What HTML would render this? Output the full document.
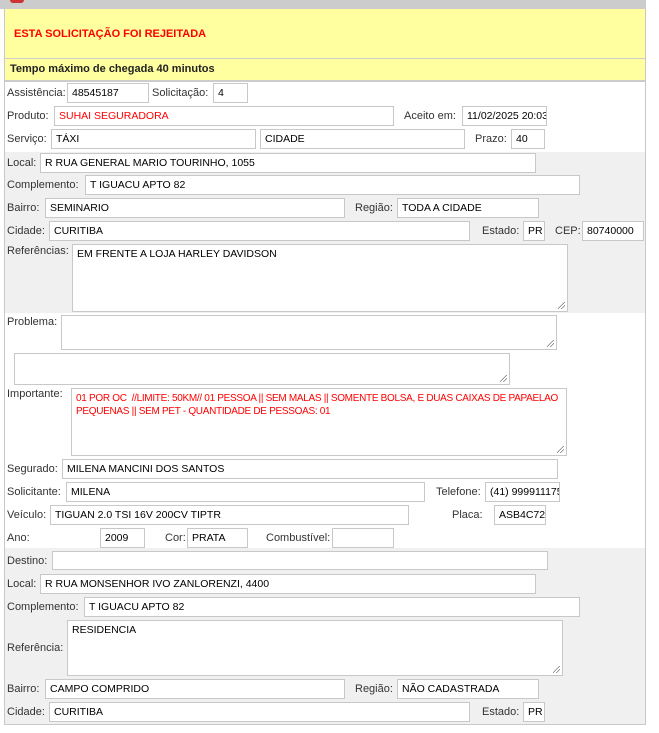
<!DOCTYPE html>
<html><head><meta charset="utf-8"><style>
*{box-sizing:border-box;margin:0;padding:0}
body{width:659px;height:733px;background:#fff;font-family:"Liberation Sans","DejaVu Sans",sans-serif;font-size:11px;color:#333;position:relative;overflow:hidden}
.a{position:absolute}
.i{position:absolute;background:#fff;border:1px solid #c8c8c8;color:#000;padding:0 4px;white-space:nowrap;overflow:hidden;height:20px;line-height:18px;font-size:10.5px}
.t{position:absolute;background:#fff;border:1px solid #c8c8c8;color:#000;padding:3px 4px;font-size:10.5px;line-height:13px}
.t:after{content:"";position:absolute;right:2px;bottom:2px;width:7px;height:7px;background:linear-gradient(135deg,transparent 45%,#777 46%,#777 52%,transparent 53%,transparent 70%,#777 71%,#777 77%,transparent 78%)}
.l{position:absolute;white-space:nowrap;line-height:20px}
.r{color:#f00}
</style></head><body>
<div class="a" style="left:0;top:0;width:646px;height:9px;background:#ccc"></div>
<div class="a" style="left:10px;top:0;width:14px;height:3px;background:#c33;border-radius:0 0 5px 5px"></div>
<div class="a" style="left:4px;top:9px;width:642px;height:716px;border:1px solid #c8c8c8;border-top:none"></div>
<div class="a" style="left:5px;top:9px;width:640px;height:49px;background:#ffff9f"></div>
<div class="a" style="left:14px;top:28px;font-weight:bold;color:#f00;font-size:11px">ESTA SOLICITAÇÃO FOI REJEITADA</div>
<div class="a" style="left:5px;top:58px;width:640px;height:1px;background:#ccc"></div>
<div class="a" style="left:5px;top:59px;width:640px;height:21px;background:#ffff9f"></div>
<div class="a" style="left:10px;top:63px;font-weight:bold;color:#222;font-size:11px">Tempo máximo de chegada 40 minutos</div>
<div class="a" style="left:5px;top:80px;width:640px;height:2px;background:#ccc"></div>
<div class="a" style="left:5px;top:152px;width:640px;height:161px;background:#f0f0f0"></div>
<div class="a" style="left:5px;top:548px;width:640px;height:176px;background:#f0f0f0"></div>

<div class="l" style="left:7px;top:83px">Assistência:</div><div class="i" style="left:67px;top:83px;width:82px">48545187</div>
<div class="l" style="left:152px;top:83px">Solicitação:</div><div class="i" style="left:213px;top:83px;width:35px">4</div>
<div class="l" style="left:7px;top:106px">Produto:</div><div class="i r" style="left:54px;top:106px;width:340px;color:#f00">SUHAI SEGURADORA</div>
<div class="l" style="left:404px;top:106px">Aceito em:</div><div class="i" style="left:462px;top:106px;width:85px">11/02/2025 20:03</div>
<div class="l" style="left:7px;top:129px">Serviço:</div><div class="i" style="left:51px;top:129px;width:205px">TÁXI</div>
<div class="i" style="left:260px;top:129px;width:205px">CIDADE</div>
<div class="l" style="left:475px;top:129px">Prazo:</div><div class="i" style="left:511px;top:129px;width:34px">40</div>

<div class="l" style="left:7px;top:153px">Local:</div><div class="i" style="left:40px;top:153px;width:496px">R RUA GENERAL MARIO TOURINHO, 1055</div>
<div class="l" style="left:7px;top:175px">Complemento:</div><div class="i" style="left:85px;top:175px;width:495px">T IGUACU APTO 82</div>
<div class="l" style="left:7px;top:198px">Bairro:</div><div class="i" style="left:45px;top:198px;width:300px">SEMINARIO</div>
<div class="l" style="left:355px;top:198px">Região:</div><div class="i" style="left:397px;top:198px;width:142px">TODA A CIDADE</div>
<div class="l" style="left:7px;top:221px">Cidade:</div><div class="i" style="left:49px;top:221px;width:421px">CURITIBA</div>
<div class="l" style="left:482px;top:221px">Estado:</div><div class="i" style="left:523px;top:221px;width:22px">PR</div>
<div class="l" style="left:555px;top:221px">CEP:</div><div class="i" style="left:582px;top:221px;width:62px">80740000</div>
<div class="l" style="left:7px;top:241px">Referências:</div><div class="t" style="left:72px;top:244px;width:496px;height:68px">EM FRENTE A LOJA HARLEY DAVIDSON</div>

<div class="l" style="left:7px;top:312px">Problema:</div><div class="t" style="left:61px;top:315px;width:496px;height:35px"></div>
<div class="t" style="left:14px;top:353px;width:496px;height:32px"></div>
<div class="l" style="left:7px;top:384px">Importante:</div><div class="t" style="left:71px;top:388px;width:496px;height:68px;color:#f00;font-size:10px;white-space:nowrap;overflow:hidden;letter-spacing:-0.3px">01 POR OC &nbsp;//LIMITE: 50KM// 01 PESSOA || SEM MALAS || SOMENTE BOLSA, E DUAS CAIXAS DE PAPAELAO<br>PEQUENAS || SEM PET - QUANTIDADE DE PESSOAS: 01</div>
<div class="l" style="left:7px;top:459px">Segurado:</div><div class="i" style="left:62px;top:459px;width:496px">MILENA MANCINI DOS SANTOS</div>
<div class="l" style="left:7px;top:482px">Solicitante:</div><div class="i" style="left:66px;top:482px;width:359px">MILENA</div>
<div class="l" style="left:436px;top:482px">Telefone:</div><div class="i" style="left:485px;top:482px;width:75px">(41) 999911175</div>
<div class="l" style="left:7px;top:505px">Veículo:</div><div class="i" style="left:50px;top:505px;width:359px">TIGUAN 2.0 TSI 16V 200CV TIPTR</div>
<div class="l" style="left:452px;top:505px">Placa:</div><div class="i" style="left:494px;top:505px;width:52px">ASB4C72</div>
<div class="l" style="left:7px;top:528px">Ano:</div><div class="i" style="left:100px;top:528px;width:45px">2009</div>
<div class="l" style="left:165px;top:528px">Cor:</div><div class="i" style="left:187px;top:528px;width:61px">PRATA</div>
<div class="l" style="left:266px;top:528px">Combustível:</div><div class="i" style="left:332px;top:528px;width:62px"></div>

<div class="l" style="left:7px;top:551px">Destino:</div><div class="i" style="left:52px;top:551px;width:496px;height:19px"></div>
<div class="l" style="left:7px;top:574px">Local:</div><div class="i" style="left:40px;top:574px;width:496px">R RUA MONSENHOR IVO ZANLORENZI, 4400</div>
<div class="l" style="left:7px;top:597px">Complemento:</div><div class="i" style="left:84px;top:597px;width:496px">T IGUACU APTO 82</div>
<div class="l" style="left:7px;top:638px">Referência:</div><div class="t" style="left:67px;top:620px;width:496px;height:56px">RESIDENCIA</div>
<div class="l" style="left:7px;top:679px">Bairro:</div><div class="i" style="left:45px;top:679px;width:300px">CAMPO COMPRIDO</div>
<div class="l" style="left:355px;top:679px">Região:</div><div class="i" style="left:397px;top:679px;width:142px">NÃO CADASTRADA</div>
<div class="l" style="left:7px;top:702px">Cidade:</div><div class="i" style="left:49px;top:702px;width:421px">CURITIBA</div>
<div class="l" style="left:482px;top:702px">Estado:</div><div class="i" style="left:523px;top:702px;width:22px">PR</div>
</body></html>
